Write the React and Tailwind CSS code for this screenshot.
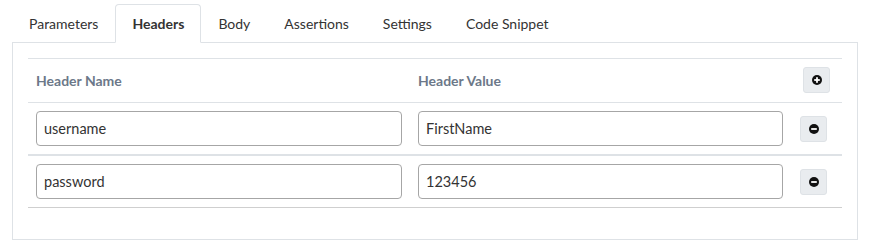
import { useState } from "react";

const tabs = ["Parameters", "Headers", "Body", "Assertions", "Settings", "Code Snippet"];

function CircleIcon({ plus }) {
  return (
    <svg width="10" height="10" viewBox="0 0 10 10">
      <circle cx="5" cy="5" r="5" fill="#111" />
      <rect x="2.2" y="4.1" width="5.6" height="1.8" fill="#fff" />
      {plus && <rect x="4.1" y="2.2" width="1.8" height="5.6" fill="#fff" />}
    </svg>
  );
}

function IconButton({ plus, className }) {
  return (
    <button
      className={
        "flex h-[26px] w-[27px] items-center justify-center rounded-[3px] border border-[#dee2e6] bg-[#e9ecef] " +
        className
      }
    >
      <CircleIcon plus={plus} />
    </button>
  );
}

export default function App() {
  const [rows, setRows] = useState([
    { name: "username", value: "FirstName" },
    { name: "password", value: "123456" },
  ]);

  return (
    <div className="h-[250px] bg-white px-[12px] pt-[4px] font-['Lato',sans-serif] text-[14px] text-[#212529]">
      <div className="flex w-[846px] border-b border-[#dee2e6]">
        {tabs.map((t) => (
          <div
            key={t}
            className={
              t === "Headers"
                ? "-mb-px rounded-t-[4px] border border-[#dee2e6] border-b-white bg-white px-4 py-2 leading-[21px] font-bold text-[#333]"
                : "-mb-px border border-transparent px-4 py-2 leading-[21px] text-[#333]"
            }
          >
            {t}
          </div>
        ))}
      </div>

      <div className="w-[846px] border-x border-b border-[#dee2e6] px-[15px] pt-[15px] pb-[31px]">
        <div className="grid grid-cols-[382px_381px_1fr] border-t border-[#dee2e6]">
          <div className="flex items-center border-b border-[#dee2e6] px-2 pt-2 pb-[9px] font-bold text-[#6c7889]">
            Header Name
          </div>
          <div className="flex items-center border-b border-[#dee2e6] px-2 pt-2 pb-[9px] font-bold text-[#6c7889]">
            Header Value
          </div>
          <div className="border-b border-[#dee2e6] pt-2 pb-[9px] pl-[12px]">
            <IconButton plus />
          </div>

          {rows.map((r, i) => {
            const line =
              i === rows.length - 1 ? "border-b border-[#cfcfcf]" : "border-b-2 border-[#dee2e6]";
            return [
              <div key={"n" + i} className={"px-2 py-2 " + line}>
                <input
                  className="h-[35px] w-full rounded-[4px] border border-[#a6a6a6] px-[7px] text-[14.5px] text-[#333] outline-none"
                  value={r.name}
                  onChange={(e) => {
                    const next = [...rows];
                    next[i] = { ...r, name: e.target.value };
                    setRows(next);
                  }}
                />
              </div>,
              <div key={"v" + i} className={"px-2 py-2 " + line}>
                <input
                  className="h-[35px] w-full rounded-[4px] border border-[#a6a6a6] px-[7px] text-[14.5px] text-[#333] outline-none"
                  value={r.value}
                  onChange={(e) => {
                    const next = [...rows];
                    next[i] = { ...r, value: e.target.value };
                    setRows(next);
                  }}
                />
              </div>,
              <div key={"b" + i} className={"flex items-center pl-[9px] " + line}>
                <IconButton />
              </div>,
            ];
          })}
        </div>
      </div>
    </div>
  );
}
